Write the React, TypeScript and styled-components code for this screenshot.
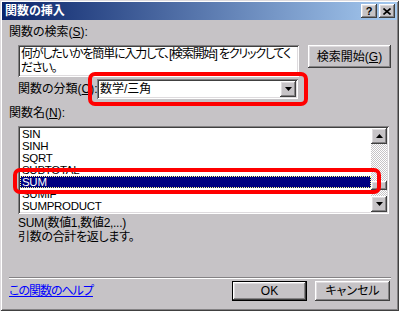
import React from 'react';
import styled, { createGlobalStyle } from 'styled-components';

const FACE = '#c6c3c6';

const GlobalStyle = createGlobalStyle`
  html, body {
    margin: 0;
    padding: 0;
    background: ${FACE};
  }
  body {
    font-family: "Liberation Sans", "Noto Sans CJK JP", sans-serif;
    font-size: 12px;
    color: #000;
    font-feature-settings: "palt";
  }
`;

// --- frame ---

const Window = styled.div`
  width: 399px;
  height: 311px;
  box-sizing: border-box;
  padding: 2px;
  background: ${FACE};
  box-shadow: inset 1px 1px 0 #dedbde, inset -1px -1px 0 #404040,
    inset 2px 2px 0 #fff, inset -2px -2px 0 #848284;
  display: flex;
  flex-direction: column;
`;

const TitleBar = styled.div`
  height: 18px;
  display: flex;
  align-items: center;
  padding: 0 2px 0 3px;
  background: linear-gradient(to right, #0a246a, #a6caf0);
`;

const Title = styled.span`
  flex: 1;
  color: #fff;
  font-weight: bold;
  line-height: 18px;
`;

const CaptionButtons = styled.div`
  display: flex;
  gap: 2px;
`;

const raised = `
  background: ${FACE};
  box-shadow: inset -1px -1px 0 #404040, inset 1px 1px 0 #fff,
    inset -2px -2px 0 #848284, inset 2px 2px 0 #dedbde;
`;

const sunken = `
  background: #fff;
  box-shadow: inset 1px 1px 0 #848284, inset -1px -1px 0 #fff,
    inset 2px 2px 0 #404040, inset -2px -2px 0 #dedbde;
`;

const CaptionButton = styled.div`
  ${raised};
  width: 16px;
  height: 14px;
  box-sizing: border-box;
  display: flex;
  align-items: center;
  justify-content: center;
  font-family: "Liberation Sans", sans-serif;
  font-weight: bold;
  font-size: 11px;
  line-height: 14px;
`;

// --- body ---

const Body = styled.div`
  flex: 1;
  display: flex;
  flex-direction: column;
  padding: 0 6px 8px 7px;
`;

const Label = styled.div<{ $top: number }>`
  margin-top: ${(p) => p.$top}px;
  line-height: 14px;
  height: 14px;
  white-space: nowrap;
`;

const SearchRow = styled.div`
  margin-top: 6px;
  padding-left: 9px;
  display: flex;
  align-items: flex-start;
  gap: 9px;
`;

const SearchBox = styled.div`
  ${sunken};
  width: 281px;
  height: 32px;
  box-sizing: border-box;
  padding: 2px 3px;
  line-height: 14px;
  letter-spacing: -1.15px;
  white-space: pre;
  overflow: hidden;
`;

const PushButton = styled.div<{ $w: number; $h: number; $default?: boolean }>`
  ${raised};
  width: ${(p) => p.$w}px;
  height: ${(p) => p.$h}px;
  box-sizing: border-box;
  display: flex;
  align-items: center;
  justify-content: center;
  line-height: 14px;
  white-space: nowrap;
  ${(p) => p.$default && 'border: 1px solid #000;'}
`;

const CategoryRow = styled.div`
  margin-top: 2px;
  padding-left: 9px;
  height: 20px;
  display: flex;
  align-items: center;
`;

const CategoryLabel = styled.span`
  width: 79px;
  white-space: nowrap;
  line-height: 14px;
`;

const Combo = styled.div`
  ${sunken};
  position: relative;
  width: 201px;
  height: 20px;
  box-sizing: border-box;
  padding: 2px;
  display: flex;
  align-items: center;
`;

const ComboText = styled.span`
  flex: 1;
  padding-left: 1px;
  line-height: 14px;
`;

const ArrowButton = styled.div`
  ${raised};
  width: 16px;
  height: 16px;
  box-sizing: border-box;
  display: flex;
  align-items: center;
  justify-content: center;
`;

const RedMark = styled.div<{ $l: number; $t: number; $w: number; $h: number }>`
  position: absolute;
  left: ${(p) => p.$l}px;
  top: ${(p) => p.$t}px;
  width: ${(p) => p.$w}px;
  height: ${(p) => p.$h}px;
  box-sizing: border-box;
  border: 4px solid #ff0000;
  border-radius: 7px;
  pointer-events: none;
`;

const ListBox = styled.div`
  ${sunken};
  position: relative;
  margin: 6px 0 0 9px;
  width: 371px;
  height: 88px;
  box-sizing: border-box;
  padding: 2px;
  display: flex;
`;

const Rows = styled.div`
  flex: 1;
  display: flex;
  flex-direction: column;
`;

const Row = styled.div<{ $selected?: boolean }>`
  height: 12px;
  box-sizing: border-box;
  padding-left: 2px;
  font-size: 11.5px;
  line-height: 12px;
  letter-spacing: -0.3px;
  white-space: nowrap;
  ${(p) =>
    p.$selected &&
    `
    background: #000080;
    color: #fff;
    outline: 1px dotted #ffff80;
    outline-offset: -1px;
  `}
`;

const ScrollBar = styled.div`
  width: 16px;
  display: flex;
  flex-direction: column;
`;

const Track = styled.div`
  flex: 1;
  background: repeating-conic-gradient(${FACE} 0 25%, #fff 0 50%) 0 0 / 2px 2px;
`;

const Thumb = styled.div<{ $top: number }>`
  ${raised};
  margin-top: ${(p) => p.$top}px;
  height: 9px;
`;

const Desc = styled.div`
  margin-top: 2px;
  padding-left: 9px;
  line-height: 14px;
  letter-spacing: -0.3px;
`;

const Footer = styled.div`
  margin-top: auto;
`;

const Separator = styled.div`
  border-top: 1px solid #848284;
  border-bottom: 1px solid #fff;
`;

const ButtonRow = styled.div`
  margin-top: 2px;
  padding-right: 1px;
  display: flex;
  align-items: center;
  gap: 8px;
`;

const HelpLink = styled.a`
  flex: 1;
  color: #0000ff;
  text-decoration: underline;
  line-height: 14px;
  letter-spacing: -1px;
  white-space: nowrap;
`;

const Triangle = ({ up }: { up?: boolean }) => (
  <svg width="7" height="4" viewBox="0 0 7 4">
    <path d={up ? 'M3.5 0L7 4H0Z' : 'M0 0H7L3.5 4Z'} fill="#000" />
  </svg>
);

const functions = ['SIN', 'SINH', 'SQRT', 'SUBTOTAL', 'SUM', 'SUMIF', 'SUMPRODUCT'];

export default function App() {
  return (
    <>
      <GlobalStyle />
      <Window>
        <TitleBar>
          <Title>関数の挿入</Title>
          <CaptionButtons>
            <CaptionButton>?</CaptionButton>
            <CaptionButton>
              <svg width="8" height="7" viewBox="0 0 8 7">
                <path d="M0.5 0.5L7.5 6.5M7.5 0.5L0.5 6.5" stroke="#000" strokeWidth="1.6" />
              </svg>
            </CaptionButton>
          </CaptionButtons>
        </TitleBar>

        <Body>
          <Label $top={5}>
            関数の検索(<u>S</u>):
          </Label>
          <SearchRow>
            <SearchBox>{'何がしたいかを簡単に入力して、[検索開始] をクリックしてく\nださい。'}</SearchBox>
            <PushButton $w={83} $h={23}>
              検索開始(<u>G</u>)
            </PushButton>
          </SearchRow>

          <CategoryRow>
            <CategoryLabel>
              関数の分類(<u>C</u>):
            </CategoryLabel>
            <Combo>
              <ComboText>数学/三角</ComboText>
              <ArrowButton>
                <Triangle />
              </ArrowButton>
              <RedMark $l={-9} $t={-7} $w={220} $h={34} />
            </Combo>
          </CategoryRow>

          <Label $top={7}>
            関数名(<u>N</u>):
          </Label>
          <ListBox>
            <Rows>
              {functions.map((f) => (
                <Row key={f} $selected={f === 'SUM'}>
                  {f}
                </Row>
              ))}
            </Rows>
            <ScrollBar>
              <ArrowButton>
                <Triangle up />
              </ArrowButton>
              <Track>
                <Thumb $top={37} />
              </Track>
              <ArrowButton>
                <Triangle />
              </ArrowButton>
            </ScrollBar>
            <RedMark $l={-5} $t={42} $w={368} $h={26} />
          </ListBox>

          <Desc>
            SUM(数値1,数値2,...)
            <br />
            引数の合計を返します。
          </Desc>

          <Footer>
            <Separator />
            <ButtonRow>
              <HelpLink>この関数のヘルプ</HelpLink>
              <PushButton $w={75} $h={20} $default>
                OK
              </PushButton>
              <PushButton $w={75} $h={20}>
                キャンセル
              </PushButton>
            </ButtonRow>
          </Footer>
        </Body>
      </Window>
    </>
  );
}
